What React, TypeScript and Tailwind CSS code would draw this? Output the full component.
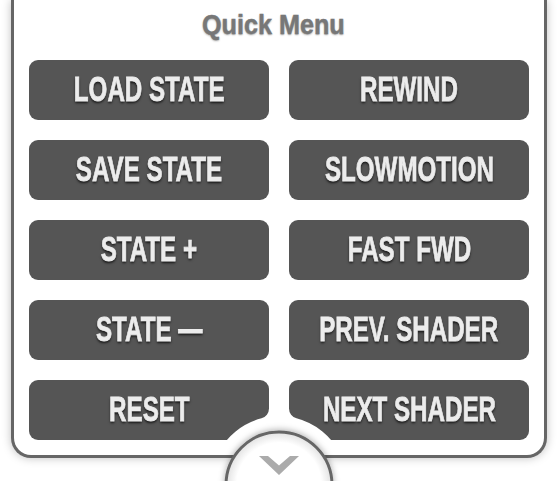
import type { FC } from 'react';

const buttons = [
  'LOAD STATE',
  'REWIND',
  'SAVE STATE',
  'SLOWMOTION',
  'STATE +',
  'FAST FWD',
  'STATE \u2014',
  'PREV. SHADER',
  'RESET',
  'NEXT SHADER',
];

const font = "font-['Liberation_Sans',Arial,sans-serif]";

const MenuButton: FC<{ label: string }> = ({ label }) => (
  <button className="flex h-[60px] w-[240px] items-center justify-center rounded-[9px] bg-[#555555] pb-[4px]">
    <span
      className={`inline-block scale-x-[0.69] whitespace-nowrap text-[35px] font-bold leading-none text-[#ececec] [-webkit-text-stroke:0.8px_#ececec] [text-shadow:0_2px_3px_rgba(0,0,0,0.75)] ${font}`}
    >
      {label}
    </span>
  </button>
);

// white cutout + pull tab drawn over the bottom of the grid
const PullTab: FC = () => (
  <svg className="pointer-events-none absolute left-0 top-0" width="557" height="481" viewBox="0 0 557 481">
    <defs>
      <radialGradient id="tabFill" cx="279" cy="485" r="53" gradientUnits="userSpaceOnUse">
        <stop offset="0.8" stopColor="#ffffff" />
        <stop offset="1" stopColor="#e2e2e2" />
      </radialGradient>
      <filter id="tabShadow" x="-30%" y="-30%" width="160%" height="160%">
        <feDropShadow dx="0" dy="-1" stdDeviation="3" floodColor="#000" floodOpacity="0.3" />
      </filter>
    </defs>
    <path
      d="M269 400 L269 408.6 A10 10 0 0 1 261.5 418.3 A69 69 0 0 0 217.4 454 L340.6 454 A69 69 0 0 0 296.5 418.3 A10 10 0 0 1 289 408.6 L289 400 Z"
      fill="#ffffff"
    />
    <circle cx="279" cy="485" r="53" fill="url(#tabFill)" stroke="#666666" strokeWidth="3" filter="url(#tabShadow)" />
    <polygon points="259,456 268,456 279,465.5 290,456 299,456 279,475" fill="#ababab" />
  </svg>
);

export default function App() {
  return (
    <div className="relative h-[481px] w-[557px] overflow-hidden bg-white">
      <div className="ml-[11px] flex h-[458px] w-[536px] flex-col items-center rounded-b-[20px] border-x-[3px] border-b-[3px] border-[#666666] bg-white px-[15px] shadow-[0_0_10px_rgba(0,0,0,0.25)]">
        <h2
          className={`mt-[5px] h-[40px] -translate-x-[6px] scale-x-[0.9] whitespace-nowrap text-[28px] font-bold leading-[40px] text-[#777777] [-webkit-text-stroke:0.4px_#777777] [text-shadow:0_1px_2px_rgba(0,0,0,0.35)] ${font}`}
        >
          Quick Menu
        </h2>
        <div className="mt-[15px] grid grid-cols-2 gap-x-[20px] gap-y-[20px]">
          {buttons.map((label) => (
            <MenuButton key={label} label={label} />
          ))}
        </div>
      </div>
      <PullTab />
    </div>
  );
}
